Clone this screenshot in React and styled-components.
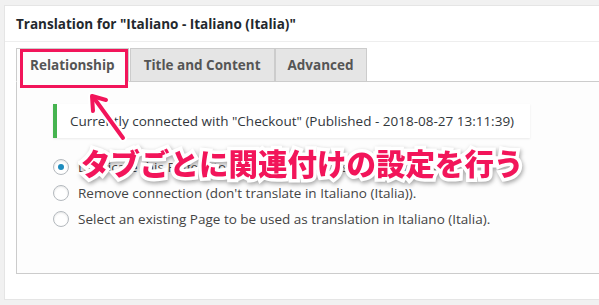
import styled, { createGlobalStyle } from "styled-components";

const GlobalStyle = createGlobalStyle`
  html, body {
    margin: 0;
    padding: 0;
    background: #f1f1f1;
  }
  body {
    font-family: "Open Sans", "Noto Sans", sans-serif;
    color: #444;
  }
`;

const Screen = styled.div`
  position: relative;
  width: 599px;
  height: 305px;
  overflow: hidden;
  padding: 5px 0 0 4px;
  box-sizing: border-box;
`;

const Panel = styled.div`
  background: #fff;
  border: 1px solid #e5e5e5;
  border-right: none;
  height: 295px;
  box-sizing: border-box;
`;

const Header = styled.h2`
  margin: 0;
  height: 35px;
  padding: 0 11px;
  display: flex;
  align-items: center;
  border-bottom: 1px solid #eee;
  font-size: 13.5px;
  font-weight: 700;
  color: #23282d;
`;

const Body = styled.div`
  padding: 6px 0 0 11px;
`;

const TabBar = styled.div`
  display: flex;
  align-items: flex-end;
  margin-bottom: -1px;
`;

const Tab = styled.div`
  height: 34px;
  padding: 0 ${(p) => p.$pad}px;
  display: flex;
  align-items: center;
  box-sizing: border-box;
  border: 1px solid #ccc;
  border-bottom: ${(p) => (p.$active ? "1px solid #fdfdfd" : "1px solid #ccc")};
  margin-right: ${(p) => (p.$active ? 1 : 0)}px;
  background: ${(p) => (p.$active ? "#fdfdfd" : "#e5e5e5")};
  font-size: 13.5px;
  font-weight: 700;
  color: #555;
`;

const TabPanel = styled.div`
  border: 1px solid #ccc;
  border-right: none;
  background: #fdfdfd;
  height: 193px;
  box-sizing: border-box;
  padding: 22px 0 0 36px;
`;

const Notice = styled.div`
  width: 477px;
  height: 34px;
  box-sizing: border-box;
  background: #fff;
  border-left: 4px solid #46b450;
  box-shadow: 0 1px 2px rgba(0, 0, 0, 0.08);
  display: flex;
  align-items: center;
  padding-left: 13px;
  font-size: 13.5px;
  color: #32373c;
`;

const Options = styled.div`
  margin-top: 21px;
  display: flex;
  flex-direction: column;
  gap: 10px;
`;

const Option = styled.label`
  display: flex;
  align-items: center;
  gap: 9px;
  height: 16px;
  font-size: 13.5px;
  color: #444;
`;

const Radio = styled.span`
  width: 16px;
  height: 16px;
  flex: none;
  box-sizing: border-box;
  border-radius: 50%;
  border: 1px solid #b4b9be;
  background: #fff;
  box-shadow: inset 0 1px 2px rgba(0, 0, 0, 0.1);
  display: flex;
  align-items: center;
  justify-content: center;

  &::after {
    content: "";
    width: 6px;
    height: 6px;
    border-radius: 50%;
    background: ${(p) => (p.$checked ? "#1e8cbe" : "transparent")};
  }
`;

/* annotation layer drawn over the screenshot */
const Highlight = styled.div`
  position: absolute;
  left: 20px;
  top: 49px;
  width: 108px;
  height: 39px;
  box-sizing: border-box;
  border: 3px solid #f2155a;
`;

const Arrow = styled.svg`
  position: absolute;
  left: 82px;
  top: 88px;
  overflow: visible;
`;

const Callout = styled.div`
  position: absolute;
  left: 81px;
  top: 140px;
  font-family: "Noto Sans CJK JP", sans-serif;
  font-weight: 900;
  font-size: 29.5px;
  line-height: 44px;
  color: #f2155a;
  white-space: nowrap;
  -webkit-text-stroke: 7px #fff;
  paint-order: stroke fill;
  filter: drop-shadow(1px 2px 2px rgba(0, 0, 0, 0.35));
`;

const options = [
  { label: "Duplicate this Page into a new one to be used as translation.", checked: true },
  { label: "Remove connection (don't translate in Italiano (Italia)).", checked: false },
  { label: "Select an existing Page to be used as translation in Italiano (Italia).", checked: false },
];

export default function App() {
  return (
    <Screen>
      <GlobalStyle />
      <Panel>
        <Header>Translation for "Italiano - Italiano (Italia)"</Header>
        <Body>
          <TabBar>
            <Tab $active $pad={13}>Relationship</Tab>
            <Tab $pad={13}>Title and Content</Tab>
            <Tab $pad={12}>Advanced</Tab>
          </TabBar>
          <TabPanel>
            <Notice>Currently connected with "Checkout" (Published - 2018-08-27 13:11:39)</Notice>
            <Options>
              {options.map((o) => (
                <Option key={o.label}>
                  <Radio $checked={o.checked} />
                  {o.label}
                </Option>
              ))}
            </Options>
          </TabPanel>
        </Body>
      </Panel>
      <Highlight />
      <Arrow width="50" height="55" viewBox="0 0 50 55">
        <g stroke="#fff" strokeWidth="8" strokeLinecap="round" strokeLinejoin="round" fill="none">
          <path d="M41 50 L12 10" />
          <path d="M11 23 L10 8 L24 12" />
        </g>
        <g stroke="#f2155a" strokeWidth="4" strokeLinecap="round" strokeLinejoin="round" fill="none">
          <path d="M41 50 L12 10" />
          <path d="M11 23 L10 8 L24 12" />
        </g>
      </Arrow>
      <Callout>タブごとに関連付けの設定を行う</Callout>
    </Screen>
  );
}
